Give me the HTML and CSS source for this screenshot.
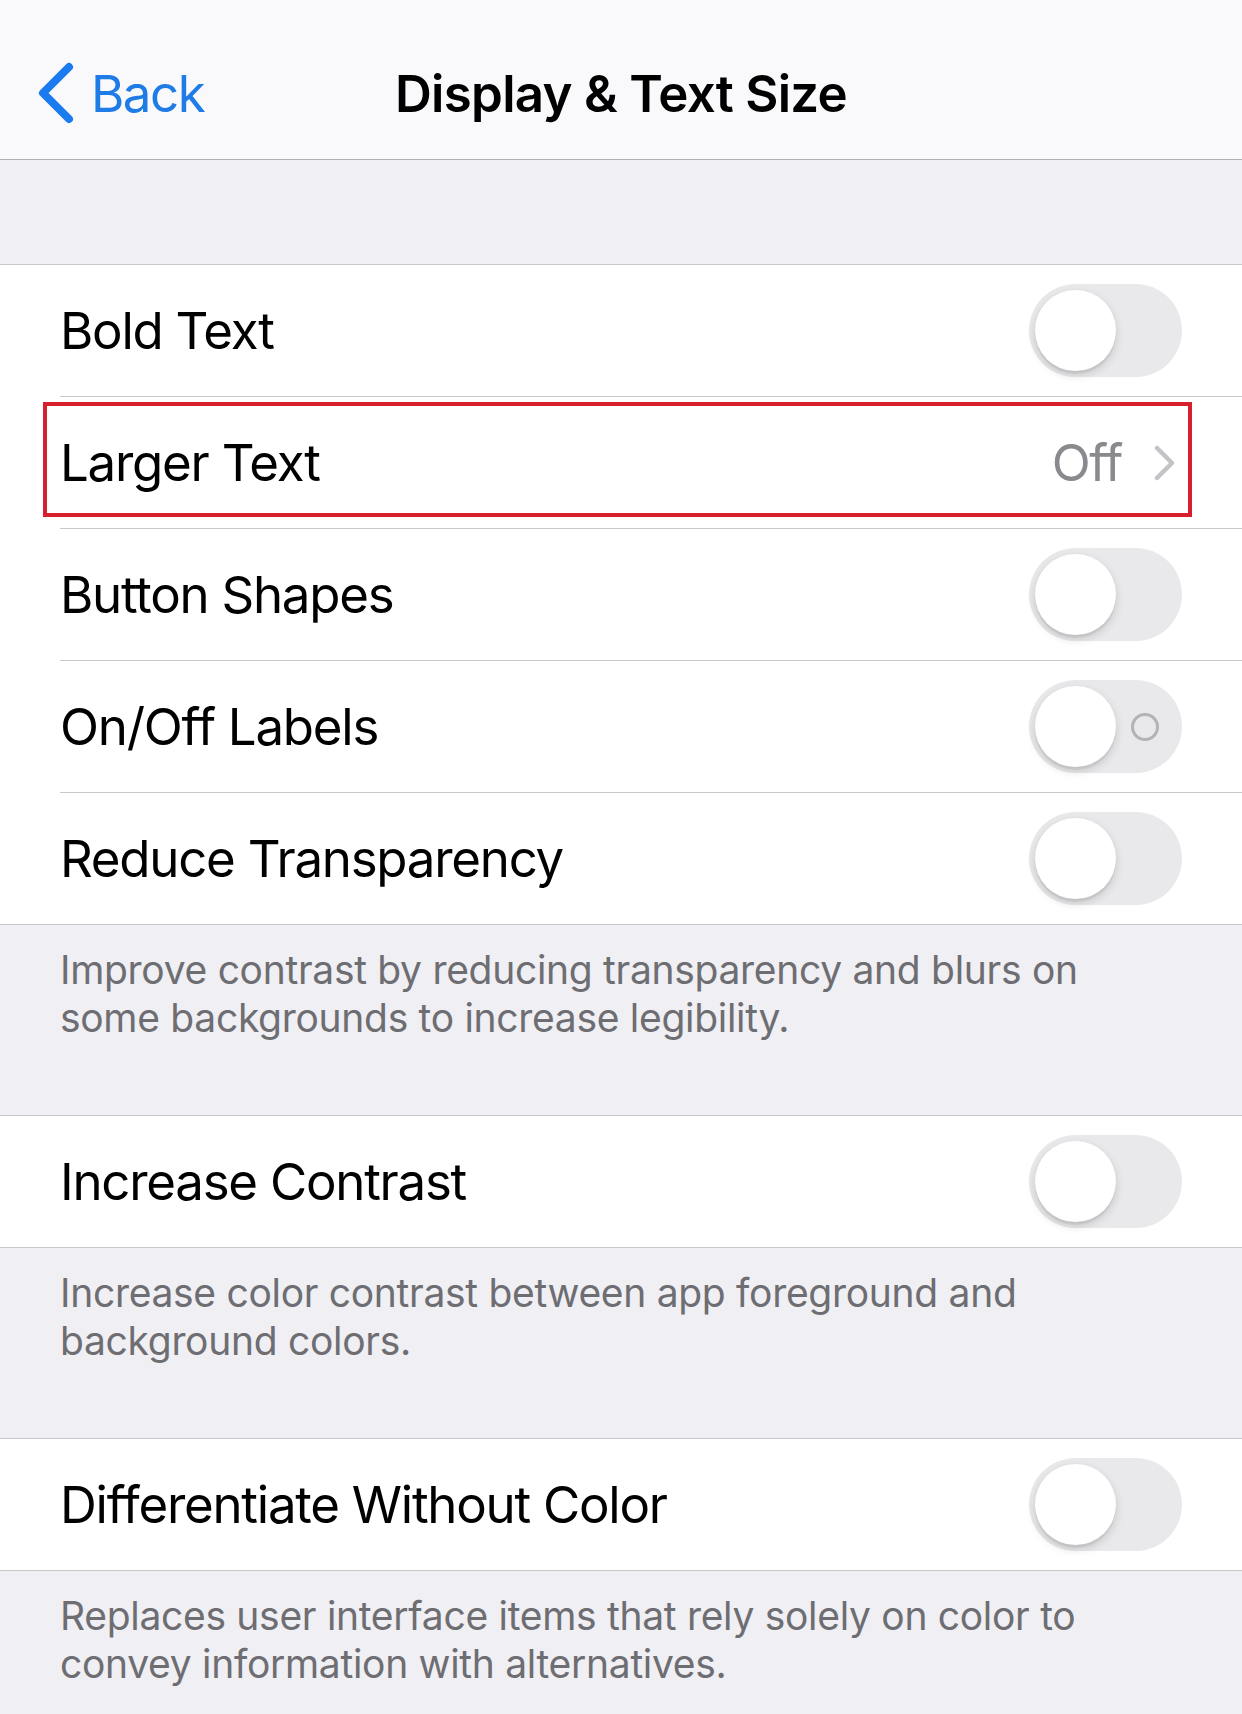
FILE: index.html
```html
<!DOCTYPE html>
<html lang="en">
  <head>
    <meta charset="UTF-8" />
    <meta name="viewport" content="width=device-width, initial-scale=1.0" />
    <title>Display &amp; Text Size</title>
    <link rel="stylesheet" href="styles.css">
  </head>
  <body>
    <header class="navbar">
      <a class="nav-back" href="#">
        <svg class="back-chevron" width="36" height="62" viewBox="0 0 36 62">
          <polyline points="31,5 5,31 31,57" fill="none" stroke="currentColor" stroke-width="8" stroke-linecap="round" stroke-linejoin="round" />
        </svg>
        <span>Back</span>
      </a>
      <h1 class="nav-title">Display &amp; Text Size</h1>
      <div></div>
    </header>

    <div class="section-gap"></div>

    <section class="group">
      <div class="row">
        <div class="row-inner">
          <span class="row-label">Bold Text</span>
          <span class="toggle"><span class="knob"></span></span>
        </div>
      </div>
      <div class="row highlighted">
        <div class="row-inner">
          <span class="row-label">Larger Text</span>
          <span class="row-value">Off</span>
          <svg class="disclosure" width="22" height="36" viewBox="0 0 22 36">
            <polyline points="3,3 18,18 3,33" fill="none" stroke="currentColor" stroke-width="4.5" stroke-linecap="round" stroke-linejoin="round" />
          </svg>
        </div>
        <div class="highlight-box"></div>
      </div>
      <div class="row">
        <div class="row-inner">
          <span class="row-label">Button Shapes</span>
          <span class="toggle"><span class="knob"></span></span>
        </div>
      </div>
      <div class="row">
        <div class="row-inner">
          <span class="row-label">On/Off Labels</span>
          <span class="toggle"><span class="knob"></span><span class="off-ring"></span></span>
        </div>
      </div>
      <div class="row">
        <div class="row-inner">
          <span class="row-label">Reduce Transparency</span>
          <span class="toggle"><span class="knob"></span></span>
        </div>
      </div>
    </section>
    <p class="footer">Improve contrast by reducing transparency and blurs on<br>some backgrounds to increase legibility.</p>

    <section class="group">
      <div class="row">
        <div class="row-inner">
          <span class="row-label">Increase Contrast</span>
          <span class="toggle"><span class="knob"></span></span>
        </div>
      </div>
    </section>
    <p class="footer">Increase color contrast between app foreground and<br>background colors.</p>

    <section class="group">
      <div class="row">
        <div class="row-inner">
          <span class="row-label">Differentiate Without Color</span>
          <span class="toggle"><span class="knob"></span></span>
        </div>
      </div>
    </section>
    <p class="footer">Replaces user interface items that rely solely on color to<br>convey information with alternatives.</p>
  </body>
</html>
```

FILE: styles.css
```css
body {
  margin: 0;
  background: #efeff4;
  font-family: "Inter", "Noto Sans", sans-serif;
  color: #000;
  overflow: hidden;
}
.navbar {
  display: grid;
  grid-template-columns: 1fr auto 1fr;
  align-items: center;
  height: 132px;
  padding-top: 27px;
  background: #f9f9fb;
  border-bottom: 1px solid #b1b1b3;
}
.nav-back {
  display: flex;
  align-items: center;
  gap: 17px;
  padding-left: 38px;
  color: #1f7be6;
  text-decoration: none;
  font-size: 51px;
  letter-spacing: -1.5px;
}
.back-chevron {
  color: #1a7af0;
}
.nav-title {
  margin: 0;
  font-size: 51px;
  font-weight: 600;
  letter-spacing: -0.7px;
}
.section-gap {
  height: 104px;
}
.group {
  background: #fff;
  border-top: 1px solid #c8c7cc;
  border-bottom: 1px solid #c8c7cc;
}
.row {
  position: relative;
  padding-left: 60px;
}
.row-inner {
  display: flex;
  align-items: center;
  height: 131px;
  padding-right: 60px;
  border-bottom: 1px solid #c8c7cc;
}
.row:last-child .row-inner {
  border-bottom: none;
}
.row-label {
  flex: 1;
  font-size: 51px;
  letter-spacing: -1.25px;
}
.row-value {
  font-size: 51px;
  letter-spacing: -1.5px;
  color: #8a8a8e;
  margin-right: 32px;
}
.disclosure {
  color: #c4c4c8;
  margin-right: 6px;
}
.highlight-box {
  position: absolute;
  top: 5px;
  left: 43px;
  width: 1141px;
  height: 107px;
  border: 4px solid #d7202d;
}
.toggle {
  display: flex;
  align-items: center;
  gap: 15px;
  width: 153px;
  height: 93px;
  box-sizing: border-box;
  padding: 0 6px;
  border-radius: 47px;
  background: #e9e9eb;
}
.knob {
  width: 81px;
  height: 81px;
  border-radius: 50%;
  background: #fff;
  box-shadow: 0 4px 10px rgba(0, 0, 0, 0.15), 0 3px 1px rgba(0, 0, 0, 0.06);
}
.off-ring {
  width: 22px;
  height: 22px;
  border: 3.5px solid #b3b3b6;
  border-radius: 50%;
}
.footer {
  margin: 0;
  min-height: 190px;
  box-sizing: border-box;
  padding: 21px 60px 0;
  font-size: 39px;
  line-height: 48px;
  letter-spacing: -0.3px;
  color: #6d6d72;
}
```
